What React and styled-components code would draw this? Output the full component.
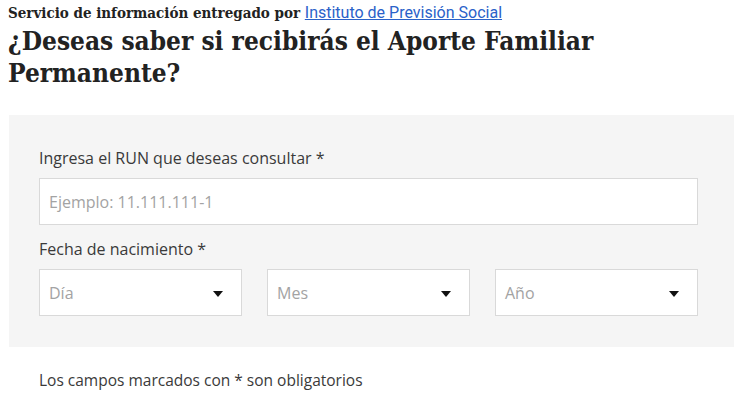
import styled, { createGlobalStyle } from "styled-components"

const Global = createGlobalStyle`
    body {
        margin: 0;
        background: #fff;
        font-family: "Open Sans", "Liberation Sans", sans-serif;
        color: #333;
    }
`

const Page = styled.div`
    padding: 4px 0 0 8px;
    width: 726px;
`

const Provider = styled.div`
    font-family: "DejaVu Serif", serif;
    font-stretch: condensed;
    font-weight: 700;
    font-size: 15px;
    line-height: 18px;
    color: #222;

    a {
        font-family: Roboto, "Liberation Sans", sans-serif;
        font-stretch: normal;
        font-weight: 400;
        font-size: 16px;
        color: #2a62c9;
        text-decoration: underline;
    }
`

const Title = styled.h1`
    margin: 3px 0 0;
    font-family: "DejaVu Serif", serif;
    font-stretch: condensed;
    font-weight: 700;
    font-size: 26px;
    line-height: 32px;
    color: #222;
    width: 640px;
`

const FormBox = styled.div`
    margin: 26px 0 0 1px;
    background: #f5f5f5;
    padding: 32px 36px 31px 30px;
`

const Label = styled.div`
    font-size: 16px;
    line-height: 22px;
    color: #3a3a3a;
    margin-bottom: ${({$gap}) => $gap || 9}px;
`

const Field = styled.div`
    height: 47px;
    box-sizing: border-box;
    background: #fff;
    border: 1px solid #d9d9d9;
    display: flex;
    align-items: center;
    justify-content: space-between;
    padding: 0 18px 0 9px;
    font-size: 16px;
    color: #a3a3a3;
    margin-bottom: ${({$gap}) => $gap || 0}px;
`

const SelectRow = styled.div`
    display: grid;
    grid-template-columns: repeat(3, 1fr);
    gap: 25px;
`

const Caret = styled.span`
    width: 0;
    height: 0;
    border-left: 5px solid transparent;
    border-right: 5px solid transparent;
    border-top: 6px solid #111;
    margin-top: 2px;
`

const Note = styled.p`
    margin: 22px 0 0 31px;
    font-size: 15.5px;
    line-height: 22px;
    color: #3a3a3a;
`

function Select({ placeholder }) {
    return (
        <Field>
            {placeholder}
            <Caret />
        </Field>
    )
}

export default function App() {
    return (
        <Page>
            <Global />
            <Provider>
                Servicio de información entregado por <a href="#">Instituto de Previsión Social</a>
            </Provider>
            <Title>¿Deseas saber si recibirás el Aporte Familiar Permanente?</Title>
            <FormBox>
                <Label>Ingresa el RUN que deseas consultar *</Label>
                <Field $gap={13}>Ejemplo: 11.111.111-1</Field>
                <Label>Fecha de nacimiento *</Label>
                <SelectRow>
                    <Select placeholder="Día" />
                    <Select placeholder="Mes" />
                    <Select placeholder="Año" />
                </SelectRow>
            </FormBox>
            <Note>Los campos marcados con * son obligatorios</Note>
        </Page>
    )
}
